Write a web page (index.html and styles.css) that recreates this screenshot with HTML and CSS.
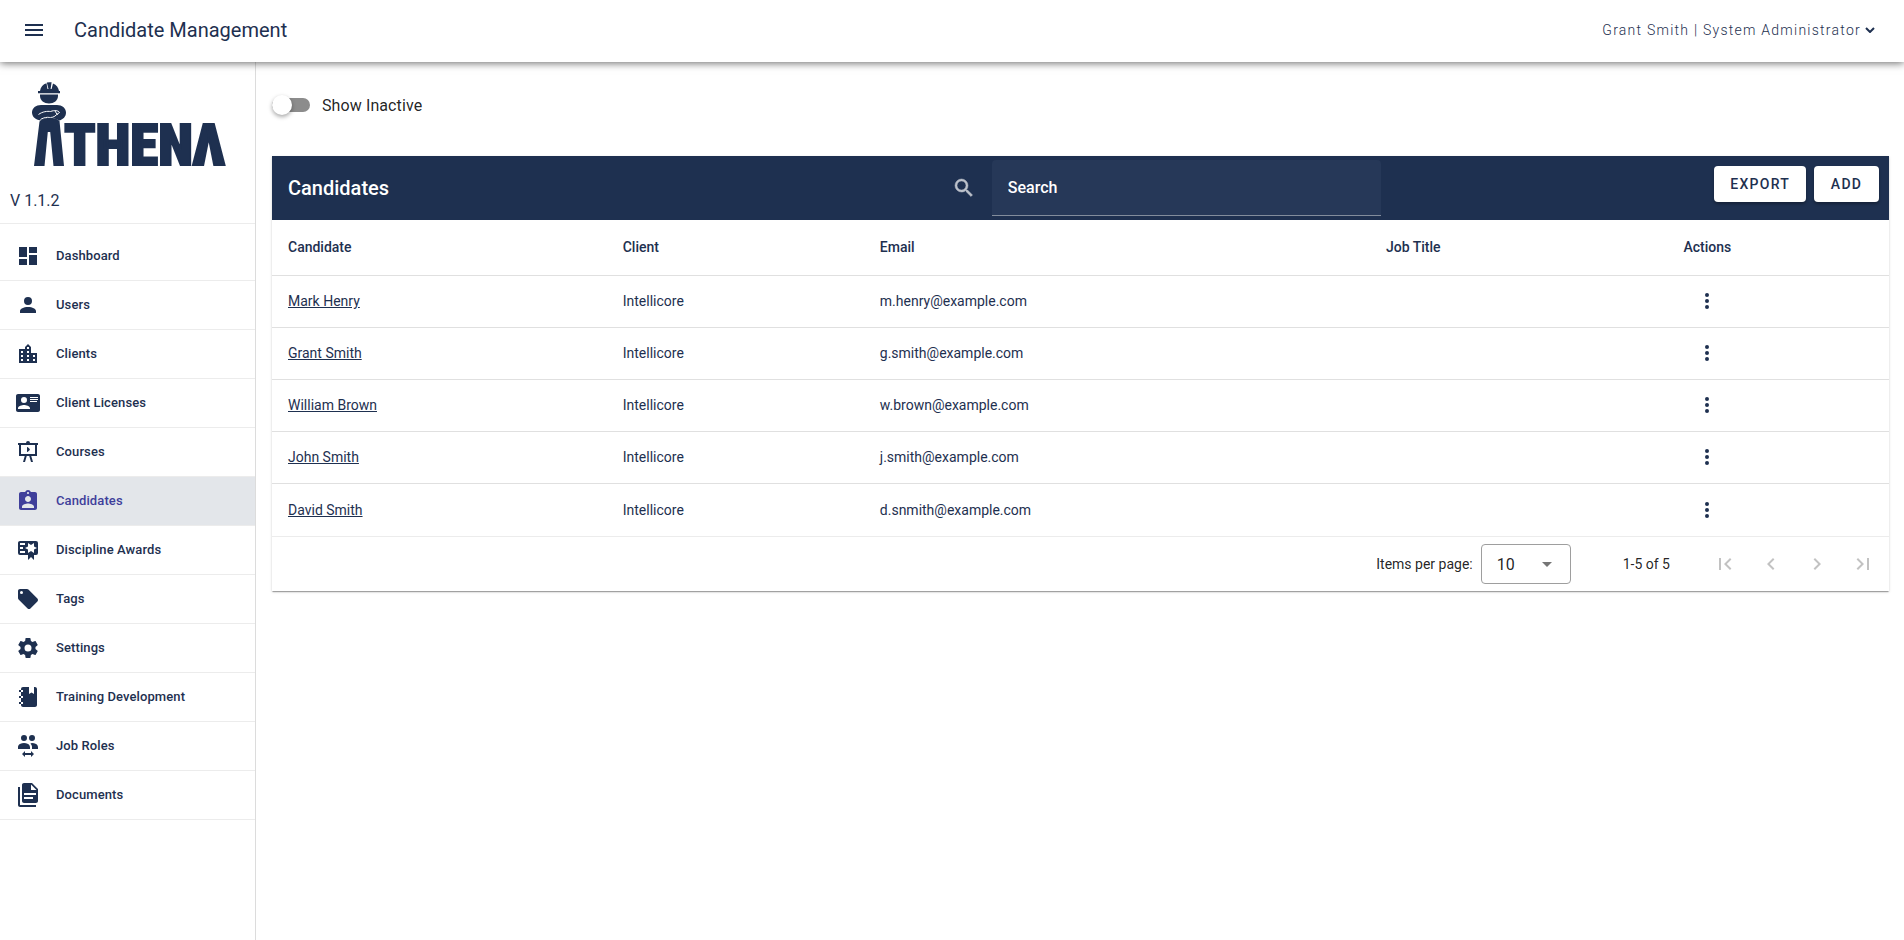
FILE: index.html
```html
<!DOCTYPE html>
<html lang="en">
<head>
    <meta charset="UTF-8">
    <meta name="viewport" content="width=device-width, initial-scale=1">
    <title>Candidate Management</title>
    <link rel="stylesheet" href="styles.css">
</head>
<body>
    <header class="topbar">
        <button class="icon-btn" type="button" aria-label="Toggle menu">
            <svg class="icon" viewBox="0 0 24 24"><path d="M3 18h18v-2H3v2zm0-5h18v-2H3v2zm0-7v2h18V6H3z"/></svg>
        </button>
        <h1 class="page-title">Candidate Management</h1>
        <button class="user-menu" type="button">
            <span>Grant Smith | System Administrator</span>
            <svg class="chevron" viewBox="0 0 10 6"><path d="M1 1l4 4 4-4"/></svg>
        </button>
    </header>

    <div class="layout">
        <aside class="sidebar">
            <div class="brand">
                <svg class="logo" viewBox="0 0 192 86" role="img" aria-label="Athena">
                    <!-- helmet -->
                    <path d="M8 9C8.500 5 11 2.200 14.500 1.200L15.500 7h1L14.800.6Q17 0 19.600.3L18.600 7h1L21 1.400C24.500 2.800 26.500 5.500 27 9H28v2.200H6V9z"/>
                    <!-- face -->
                    <path d="M8 12.500h18V14c0 4.500-4 7.500-9 7.500S8 18.500 8 14z"/>
                    <!-- folded arms -->
                    <path d="M9 23h16c5 0 9 3 9 7.500S31 37 27.500 38.500L24 37c-4-2-10-2-14.500 1.500C4 38 0 35 0 30.500S4 23 9 23z"/>
                    <path class="logo-line" d="M6.500 32.500c4-3 9-3.500 12-3 4-1.500 8-1 9 1l-3 2.200c-2 2.400-5 3.300-9 2.600-3 .2-5 1-7 2.200M23 29l2.500 4"/>
                    <!-- legs -->
                    <path d="M7.500 39.500c5-4.500 15-5 20-.5L32 84H21.500L18.200 50h-2.400L12.500 84H2z"/>
                    <text class="logo-text" x="32" y="83">THENΛ</text>
                </svg>
                <p class="version">V 1.1.2</p>
            </div>
            <nav class="nav">
                <a class="nav-item" href="#">
                    <svg class="icon" viewBox="0 0 24 24"><path d="M13 3v6h8V3m-8 18h8V11h-8M3 21h8v-6H3m0-2h8V3H3v10z"/></svg>
                    Dashboard
                </a>
                <a class="nav-item" href="#">
                    <svg class="icon" viewBox="0 0 24 24"><path d="M12 4a4 4 0 014 4 4 4 0 01-4 4 4 4 0 01-4-4 4 4 0 014-4m0 10c4.420 0 8 1.790 8 4v2H4v-2c0-2.210 3.580-4 8-4z"/></svg>
                    Users
                </a>
                <a class="nav-item" href="#">
                    <svg class="icon" viewBox="0 0 24 24"><path d="M15 11V5l-3-3-3 3v2H3v14h18V11h-6zm-8 8H5v-2h2v2zm0-4H5v-2h2v2zm0-4H5V9h2v2zm6 8h-2v-2h2v2zm0-4h-2v-2h2v2zm0-4h-2V9h2v2zm0-4h-2V5h2v2zm6 12h-2v-2h2v2zm0-4h-2v-2h2v2z"/></svg>
                    Clients
                </a>
                <a class="nav-item" href="#">
                    <svg class="icon" viewBox="0 0 24 24"><path d="M2 3h20c1.050 0 2 .95 2 2v14c0 1.050-.95 2-2 2H2c-1.050 0-2-.95-2-2V5c0-1.050.95-2 2-2m12 3v1h8V6h-8m0 2v1h8V8h-8m0 2v1h7v-1h-7M8 13.910C6 13.910 2 15 2 17v1h12v-1c0-2-4-3.090-6-3.090M8 6a3 3 0 00-3 3 3 3 0 003 3 3 3 0 003-3 3 3 0 00-3-3z"/></svg>
                    Client Licenses
                </a>
                <a class="nav-item" href="#">
                    <svg class="icon" viewBox="0 0 24 24"><path d="M2 3h8a2 2 0 012-2 2 2 0 012 2h8v2h-1v11h-5.750L17 22h-2l-1.750-6h-2.500L9 22H7l1.750-6H3V5H2V3m3 2v9h14V5H5m6.850 6.850c-.09.09-.21.15-.35.15a.5.5 0 01-.5-.5v-4a.5.5 0 01.5-.5c.14 0 .26.06.35.15l1.400 1.390c.32.32.64.64.64.96s-.32.64-.64.96l-1.400 1.390z"/></svg>
                    Courses
                </a>
                <a class="nav-item active" href="#" aria-current="page">
                    <svg class="icon" viewBox="0 0 24 24"><path d="M19 3h-4.180C14.400 1.840 13.300 1 12 1c-1.300 0-2.400.84-2.820 2H5c-1.100 0-2 .9-2 2v14c0 1.100.9 2 2 2h14c1.100 0 2-.9 2-2V5c0-1.100-.9-2-2-2zm-7 0c.55 0 1 .45 1 1s-.45 1-1 1-1-.45-1-1 .45-1 1-1zm0 4c1.660 0 3 1.340 3 3s-1.340 3-3 3-3-1.340-3-3 1.340-3 3-3zm6 12H6v-1.400c0-2 4-3.100 6-3.100s6 1.100 6 3.100V19z"/></svg>
                    Candidates
                </a>
                <a class="nav-item" href="#">
                    <svg class="icon" viewBox="0 0 24 24"><path d="M4 3c-1.110 0-2 .89-2 2v10a2 2 0 002 2h8v5l3-3 3 3v-5h2a2 2 0 002-2V5a2 2 0 00-2-2H4m8 2l3 2 3-2v3.500l3 1.500-3 1.500V15l-3-2-3 2v-3.500L9 10l3-1.500V5M4 5h5v2H4V5m0 4h3v2H4V9m0 4h5v2H4v-2z"/></svg>
                    Discipline Awards
                </a>
                <a class="nav-item" href="#">
                    <svg class="icon" viewBox="0 0 24 24"><path d="M5.500 7A1.500 1.500 0 014 5.500 1.500 1.500 0 015.500 4 1.500 1.500 0 017 5.500 1.500 1.500 0 015.500 7m15.910 4.580l-9-9C12.050 2.220 11.550 2 11 2H4c-1.110 0-2 .89-2 2v7c0 .55.22 1.050.59 1.410l8.990 9c.37.36.87.59 1.420.59s1.050-.23 1.410-.59l7-7c.37-.36.59-.86.59-1.410 0-.56-.23-1.060-.59-1.420z"/></svg>
                    Tags
                </a>
                <a class="nav-item" href="#">
                    <svg class="icon" viewBox="0 0 24 24"><path d="M12 15.500A3.500 3.500 0 018.500 12 3.500 3.500 0 0112 8.500a3.500 3.500 0 013.500 3.500 3.500 3.500 0 01-3.500 3.500m7.430-2.530c.04-.32.07-.64.07-.97 0-.33-.03-.66-.07-1l2.110-1.630c.19-.15.24-.42.12-.64l-2-3.460c-.12-.22-.39-.31-.61-.22l-2.490 1c-.52-.39-1.060-.73-1.690-.98l-.37-2.650A.506.506 0 0014 2h-4c-.25 0-.46.18-.5.42l-.37 2.650c-.63.25-1.170.59-1.690.98l-2.490-1c-.22-.09-.49 0-.61.22l-2 3.460c-.13.22-.07.49.12.64L4.570 11c-.04.34-.07.67-.07 1 0 .33.03.65.07.97l-2.110 1.660c-.19.15-.25.42-.12.64l2 3.460c.12.22.39.3.61.22l2.490-1.010c.52.4 1.060.74 1.690.99l.37 2.650c.04.24.25.42.5.42h4c.25 0 .46-.18.5-.42l.37-2.650c.63-.26 1.170-.59 1.690-.99l2.490 1.010c.22.08.49 0 .61-.22l2-3.460c.12-.22.07-.49-.12-.64l-2.110-1.660z"/></svg>
                    Settings
                </a>
                <a class="nav-item" href="#">
                    <svg class="icon" viewBox="0 0 24 24"><path d="M3 7V5h2V4a2 2 0 012-2h6v7l2.500-1.500L18 9V2h1c1.050 0 2 .95 2 2v16c0 1.050-.95 2-2 2H7c-1.050 0-2-.95-2-2v-1H3v-2h2v-4H3v-2h2V7H3m4 4H5v2h2v-2m0-4V5H5v2h2m0 12v-2H5v2h2z"/></svg>
                    Training Development
                </a>
                <a class="nav-item" href="#">
                    <svg class="icon" viewBox="0 0 24 24"><path d="M16 9c6 0 6 4 6 4v2h-6v-2s0-1.310-1-2.670c-.17-.23-.38-.45-.59-.66C14.770 9.400 15.300 9 16 9M2 13s0-4 6-4 6 4 6 4v2H2v-2m7 4v2h6v-2l3 3-3 3v-2H9v2l-3-3 3-3M8 1a3 3 0 010 6 3 3 0 010-6m8 0a3 3 0 010 6 3 3 0 010-6z"/></svg>
                    Job Roles
                </a>
                <a class="nav-item" href="#">
                    <svg class="icon" viewBox="0 0 24 24"><path fill-rule="evenodd" d="M16 0H8C6.900 0 6 .9 6 2v16c0 1.100.9 2 2 2h12c1.100 0 2-.9 2-2V6l-6-6zM15 1.500L20.500 7H15V1.500zM8 10h12v2H8v-2zm0 4h9v2H8v-2zM4 4v18h16v2H4c-1.100 0-2-.9-2-2V4h2z"/></svg>
                    Documents
                </a>
            </nav>
        </aside>

        <main class="content">
            <label class="toggle">
                <input class="switch" type="checkbox" role="switch">
                Show Inactive
            </label>

            <section class="card">
                <div class="toolbar">
                    <h2 class="card-title">Candidates</h2>
                    <div class="search">
                        <label class="search-icon" for="search" aria-label="Search">
                            <svg class="icon" viewBox="0 0 24 24"><path d="M15.500 14h-.79l-.28-.27A6.471 6.471 0 0016 9.500 6.500 6.500 0 109.500 16c1.610 0 3.090-.59 4.230-1.570l.27.28v.79l5 4.990L20.490 19l-4.990-5zm-6 0C7.010 14 5 11.990 5 9.500S7.010 5 9.500 5 14 7.010 14 9.500 11.990 14 9.500 14z"/></svg>
                        </label>
                        <input class="search-input" id="search" type="text" placeholder="Search">
                    </div>
                    <div class="toolbar-actions">
                        <button class="btn" type="button">EXPORT</button>
                        <button class="btn" type="button">ADD</button>
                    </div>
                </div>

                <table class="table">
                    <colgroup>
                        <col class="col-candidate">
                        <col class="col-client">
                        <col class="col-email">
                        <col class="col-job">
                        <col>
                    </colgroup>
                    <thead>
                        <tr>
                            <th>Candidate</th>
                            <th>Client</th>
                            <th>Email</th>
                            <th>Job Title</th>
                            <th>Actions</th>
                        </tr>
                    </thead>
                    <tbody>
                        <tr>
                            <td><a href="#">Mark Henry</a></td>
                            <td>Intellicore</td>
                            <td>m.henry@example.com</td>
                            <td></td>
                            <td><button class="icon-btn" type="button" aria-label="Actions for Mark Henry"><svg class="icon" viewBox="0 0 24 24"><path d="M12 8a2 2 0 100-4 2 2 0 000 4zm0 2a2 2 0 100 4 2 2 0 000-4zm0 6a2 2 0 100 4 2 2 0 000-4z"/></svg></button></td>
                        </tr>
                        <tr>
                            <td><a href="#">Grant Smith</a></td>
                            <td>Intellicore</td>
                            <td>g.smith@example.com</td>
                            <td></td>
                            <td><button class="icon-btn" type="button" aria-label="Actions for Grant Smith"><svg class="icon" viewBox="0 0 24 24"><path d="M12 8a2 2 0 100-4 2 2 0 000 4zm0 2a2 2 0 100 4 2 2 0 000-4zm0 6a2 2 0 100 4 2 2 0 000-4z"/></svg></button></td>
                        </tr>
                        <tr>
                            <td><a href="#">William Brown</a></td>
                            <td>Intellicore</td>
                            <td>w.brown@example.com</td>
                            <td></td>
                            <td><button class="icon-btn" type="button" aria-label="Actions for William Brown"><svg class="icon" viewBox="0 0 24 24"><path d="M12 8a2 2 0 100-4 2 2 0 000 4zm0 2a2 2 0 100 4 2 2 0 000-4zm0 6a2 2 0 100 4 2 2 0 000-4z"/></svg></button></td>
                        </tr>
                        <tr>
                            <td><a href="#">John Smith</a></td>
                            <td>Intellicore</td>
                            <td>j.smith@example.com</td>
                            <td></td>
                            <td><button class="icon-btn" type="button" aria-label="Actions for John Smith"><svg class="icon" viewBox="0 0 24 24"><path d="M12 8a2 2 0 100-4 2 2 0 000 4zm0 2a2 2 0 100 4 2 2 0 000-4zm0 6a2 2 0 100 4 2 2 0 000-4z"/></svg></button></td>
                        </tr>
                        <tr>
                            <td><a href="#">David Smith</a></td>
                            <td>Intellicore</td>
                            <td>d.snmith@example.com</td>
                            <td></td>
                            <td><button class="icon-btn" type="button" aria-label="Actions for David Smith"><svg class="icon" viewBox="0 0 24 24"><path d="M12 8a2 2 0 100-4 2 2 0 000 4zm0 2a2 2 0 100 4 2 2 0 000-4zm0 6a2 2 0 100 4 2 2 0 000-4z"/></svg></button></td>
                        </tr>
                    </tbody>
                </table>

                <div class="paginator">
                    <label for="page-size">Items per page:</label>
                    <div class="select">
                        <select id="page-size">
                            <option>10</option>
                            <option>25</option>
                            <option>50</option>
                        </select>
                        <svg class="select-arrow" viewBox="0 0 10 5"><path d="M0 0h10L5 5z"/></svg>
                    </div>
                    <span class="range">1-5 of 5</span>
                    <div class="pager">
                        <button class="icon-btn" type="button" disabled aria-label="First page"><svg class="icon" viewBox="0 0 24 24"><path d="M18.410 16.590L13.820 12l4.590-4.590L17 6l-6 6 6 6zM6 6h2v12H6z"/></svg></button>
                        <button class="icon-btn" type="button" disabled aria-label="Previous page"><svg class="icon" viewBox="0 0 24 24"><path d="M15.410 7.410L14 6l-6 6 6 6 1.410-1.410L10.830 12z"/></svg></button>
                        <button class="icon-btn" type="button" disabled aria-label="Next page"><svg class="icon" viewBox="0 0 24 24"><path d="M10 6L8.590 7.410 13.170 12l-4.580 4.590L10 18l6-6z"/></svg></button>
                        <button class="icon-btn" type="button" disabled aria-label="Last page"><svg class="icon" viewBox="0 0 24 24"><path d="M5.590 7.410L10.180 12l-4.590 4.590L7 18l6-6-6-6zM16 6h2v12h-2z"/></svg></button>
                    </div>
                </div>
            </section>
        </main>
    </div>
</body>
</html>
```
FILE: styles.css
```css
*{margin: 0;padding: 0;box-sizing: border-box;}
body{min-height: 100vh;display: flex;flex-direction: column;font-family: Roboto, sans-serif;font-size: 14px;color: #1e3050;background: #fff;}
a{color: inherit;}
button,input,select{font: inherit;color: inherit;border: 0;background: none;}
button{cursor: pointer;}

.icon{display: block;width: 24px;height: 24px;fill: currentColor;}
.icon-btn{display: flex;align-items: center;justify-content: center;width: 48px;height: 48px;}

/* top bar */
.topbar{position: relative;z-index: 1;display: flex;align-items: center;height: 62px;padding: 0 29px 2px 10px;background: #fff;box-shadow: 0 1px 8px rgba(0,0,0,.6);}
.page-title{margin-left: 16px;font-size: 20px;font-weight: 400;}
.user-menu{display: flex;align-items: center;gap: 4px;margin-left: auto;font-weight: 300;letter-spacing: 1.25px;}
.chevron{width: 10px;height: 6px;fill: none;stroke: currentColor;stroke-width: 2;}

.layout{flex: 1;display: flex;}

/* sidebar */
.sidebar{width: 256px;border-right: 1px solid #dcdcdc;}
.brand{height: 162px;padding: 20px 10px 0;border-bottom: 1px solid #ececec;}
.logo{display: block;width: 192px;height: 86px;margin-left: 22px;fill: #1e3050;overflow: visible;}
.logo-line{fill: none;stroke: #fff;}
.logo-text{font-family: "Roboto Condensed", "Liberation Sans Narrow", "Liberation Sans", sans-serif;font-size: 57px;font-weight: 900;stroke: #1e3050;stroke-width: 2;}
.version{margin-top: 23px;font-size: 16px;line-height: 20px;}
.nav{padding-top: 8px;}
.nav-item{display: flex;align-items: center;gap: 16px;height: 49px;padding: 0 16px;border-bottom: 1px solid #ececec;font-size: 13px;font-weight: 500;line-height: 14px;letter-spacing: .1px;text-decoration: none;}
.nav-item.active{color: #3f3f9b;background: #e3e6ea;}

/* content */
.content{flex: 1;min-width: 0;padding: 31px 15px 16px 16px;}
.toggle{display: flex;align-items: center;gap: 12px;width: max-content;height: 24px;font-size: 16px;letter-spacing: .1px;color: rgba(0,0,0,.87);}
.switch{appearance: none;display: flex;align-items: center;width: 38px;height: 14px;border-radius: 7px;background: #8c8c8c;cursor: pointer;}
.switch::before{content: "";width: 20px;height: 20px;border-radius: 50%;background: #fff;box-shadow: 0 2px 4px rgba(0,0,0,.35);}
.switch:checked{justify-content: flex-end;}

.card{margin-top: 39px;background: #fff;box-shadow: 0 2px 1px -1px rgba(0,0,0,.2), 0 1px 1px rgba(0,0,0,.14), 0 1px 3px rgba(0,0,0,.12);}
.toolbar{display: grid;grid-template-columns: 41.3% 27.3% 1fr;align-items: center;height: 64px;background: #1e3050;color: #fff;}
.card-title{padding-left: 16px;font-size: 20px;font-weight: 500;}
.search{display: flex;align-items: center;gap: 4px;}
.search-icon{display: flex;align-items: center;justify-content: center;width: 48px;height: 48px;color: #bcc1ca;}
.search-icon .icon{stroke: currentColor;stroke-width: .5;}
.search-input{flex: 1;min-width: 0;height: 56px;padding: 0 16px;border-bottom: 1px solid #828c9c;border-radius: 4px 4px 0 0;background: #263858;font-size: 16px;font-weight: 500;}
.search-input::placeholder{color: #fff;opacity: 1;}
.toolbar-actions{display: flex;justify-content: flex-end;gap: 8px;align-self: start;padding: 10px 10px 0 0;}
.btn{min-width: 65px;height: 36px;padding: 0 16px;border-radius: 4px;background: #fff;color: #1e3050;font-weight: 500;letter-spacing: 1.25px;box-shadow: 0 2px 3px rgba(0,0,0,.3);}

.table{width: 100%;table-layout: fixed;border-spacing: 0;}
.col-candidate{width: 20.7%;}
.col-client{width: 15.9%;}
.col-email{width: 31.3%;}
.col-job{width: 18.4%;}
.table th{height: 56px;padding: 0 16px 2px;border-bottom: 1px solid #e0e0e0;text-align: left;font-weight: 500;}
.table td{height: 52px;padding: 0 16px 1px;border-bottom: 1px solid #e0e0e0;}
.table tr:last-child td{border-bottom: 0;}

/* paginator */
.paginator{display: flex;align-items: center;justify-content: flex-end;height: 55px;padding-right: 3px;border-top: 1px solid #ececec;color: rgba(0,0,0,.87);}
.select{position: relative;width: 90px;margin-left: 8px;}
.select select{display: block;appearance: none;width: 100%;height: 40px;padding: 0 15px;border: 1px solid #9e9e9e;border-radius: 4px;font-size: 16px;}
.select-arrow{position: absolute;top: 18px;right: 19px;width: 10px;height: 5px;fill: #757575;pointer-events: none;}
.range{margin: 0 32px 0 52px;}
.pager{display: flex;color: #c2c2c2;}
.pager .icon-btn{width: 46px;}
```
